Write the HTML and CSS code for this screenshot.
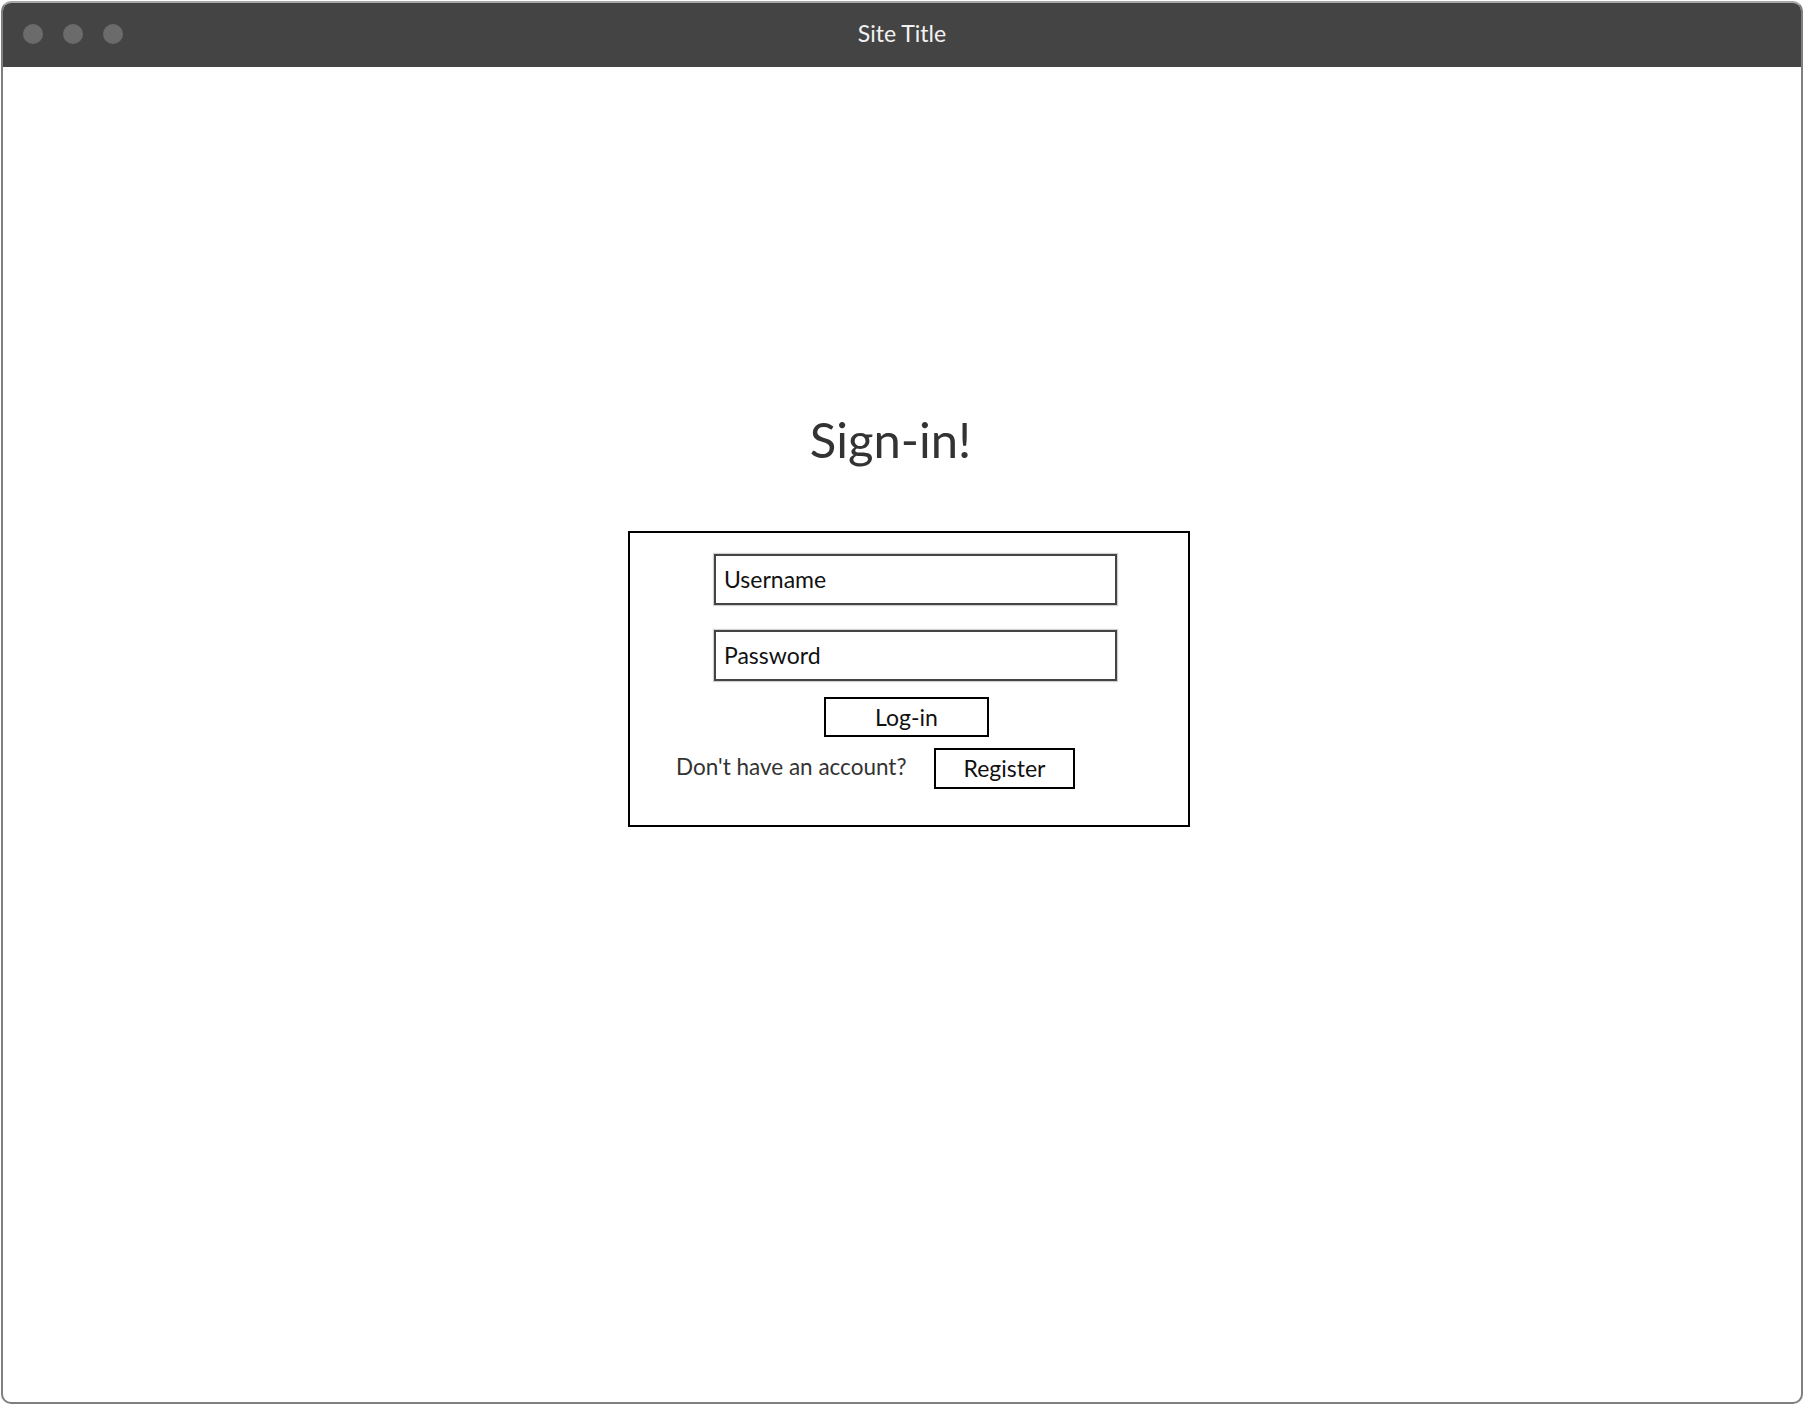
FILE: index.html
```html
<!DOCTYPE html>
<html>
<head>
<meta charset="utf-8">
<link rel="stylesheet" href="styles.css">
</head>
<body>
<div class="window">
  <div class="titlebar">
    <div class="dots"><span class="dot"></span><span class="dot"></span><span class="dot"></span></div>
    <div class="site-title">Site Title</div>
    <div></div>
  </div>
  <div class="content">
    <h1 class="heading">Sign-in!</h1>
    <div class="login-box">
      <div class="field field-user">Username</div>
      <div class="field field-pass">Password</div>
      <div class="btn btn-login">Log-in</div>
      <div class="register-row">
        <span class="register-text">Don't have an account?</span>
        <span class="btn btn-register">Register</span>
      </div>
    </div>
  </div>
</div>
</body>
</html>
```

FILE: styles.css
```css
html, body {
  margin: 0;
  padding: 0;
  background: #ffffff;
}
body {
  font-family: "Lato", "Open Sans", sans-serif;
  color: #222;
}
.window {
  margin: 1px 0 0 1px;
  width: 1798px;
  height: 1399px;
  border: 2px solid #7f7f7f;
  border-top-color: #a8a8a8;
  border-radius: 10px;
  overflow: hidden;
  display: flex;
  flex-direction: column;
  box-sizing: content-box;
}
.titlebar {
  height: 64px;
  background: #444444;
  display: grid;
  grid-template-columns: 1fr auto 1fr;
  align-items: center;
}
.dots {
  display: flex;
  gap: 20px;
  padding-left: 20px;
  margin-top: -3px;
}
.dot {
  width: 20px;
  height: 20px;
  border-radius: 50%;
  background: #6b6b6b;
}
.site-title {
  color: #f2f2f2;
  font-size: 23px;
  margin-top: -4px;
}
.content {
  flex: 1;
  display: flex;
  flex-direction: column;
  align-items: center;
}
.heading {
  margin: 342px 0 0 -23px;
  font-weight: normal;
  font-size: 49px;
  line-height: 60px;
  color: #333;
}
.login-box {
  margin: 62px 0 0 14px;
  width: 558px;
  border: 2px solid #000;
  padding: 21px 0 36px 0;
}
.field {
  margin-left: 84px;
  width: 391px;
  height: 47px;
  border: 2px solid #444;
  box-shadow: 0 0 1px 1px rgba(0,0,0,0.18);
  font-size: 23px;
  line-height: 47px;
  padding-left: 8px;
  box-sizing: content-box;
  color: #111;
}
.field-pass {
  margin-top: 25px;
}
.btn {
  border: 2px solid #000;
  font-size: 23px;
  color: #111;
  text-align: center;
  box-sizing: border-box;
}
.btn-login {
  margin: 16px 0 0 194px;
  width: 165px;
  height: 40px;
  line-height: 36px;
}
.register-row {
  margin: 11px 0 0 46px;
  display: flex;
  align-items: center;
}
.register-text {
  font-size: 22.5px;
  color: #333;
  width: 258px;
  margin-top: -4px;
}
.btn-register {
  width: 141px;
  height: 41px;
  line-height: 37px;
}
```
